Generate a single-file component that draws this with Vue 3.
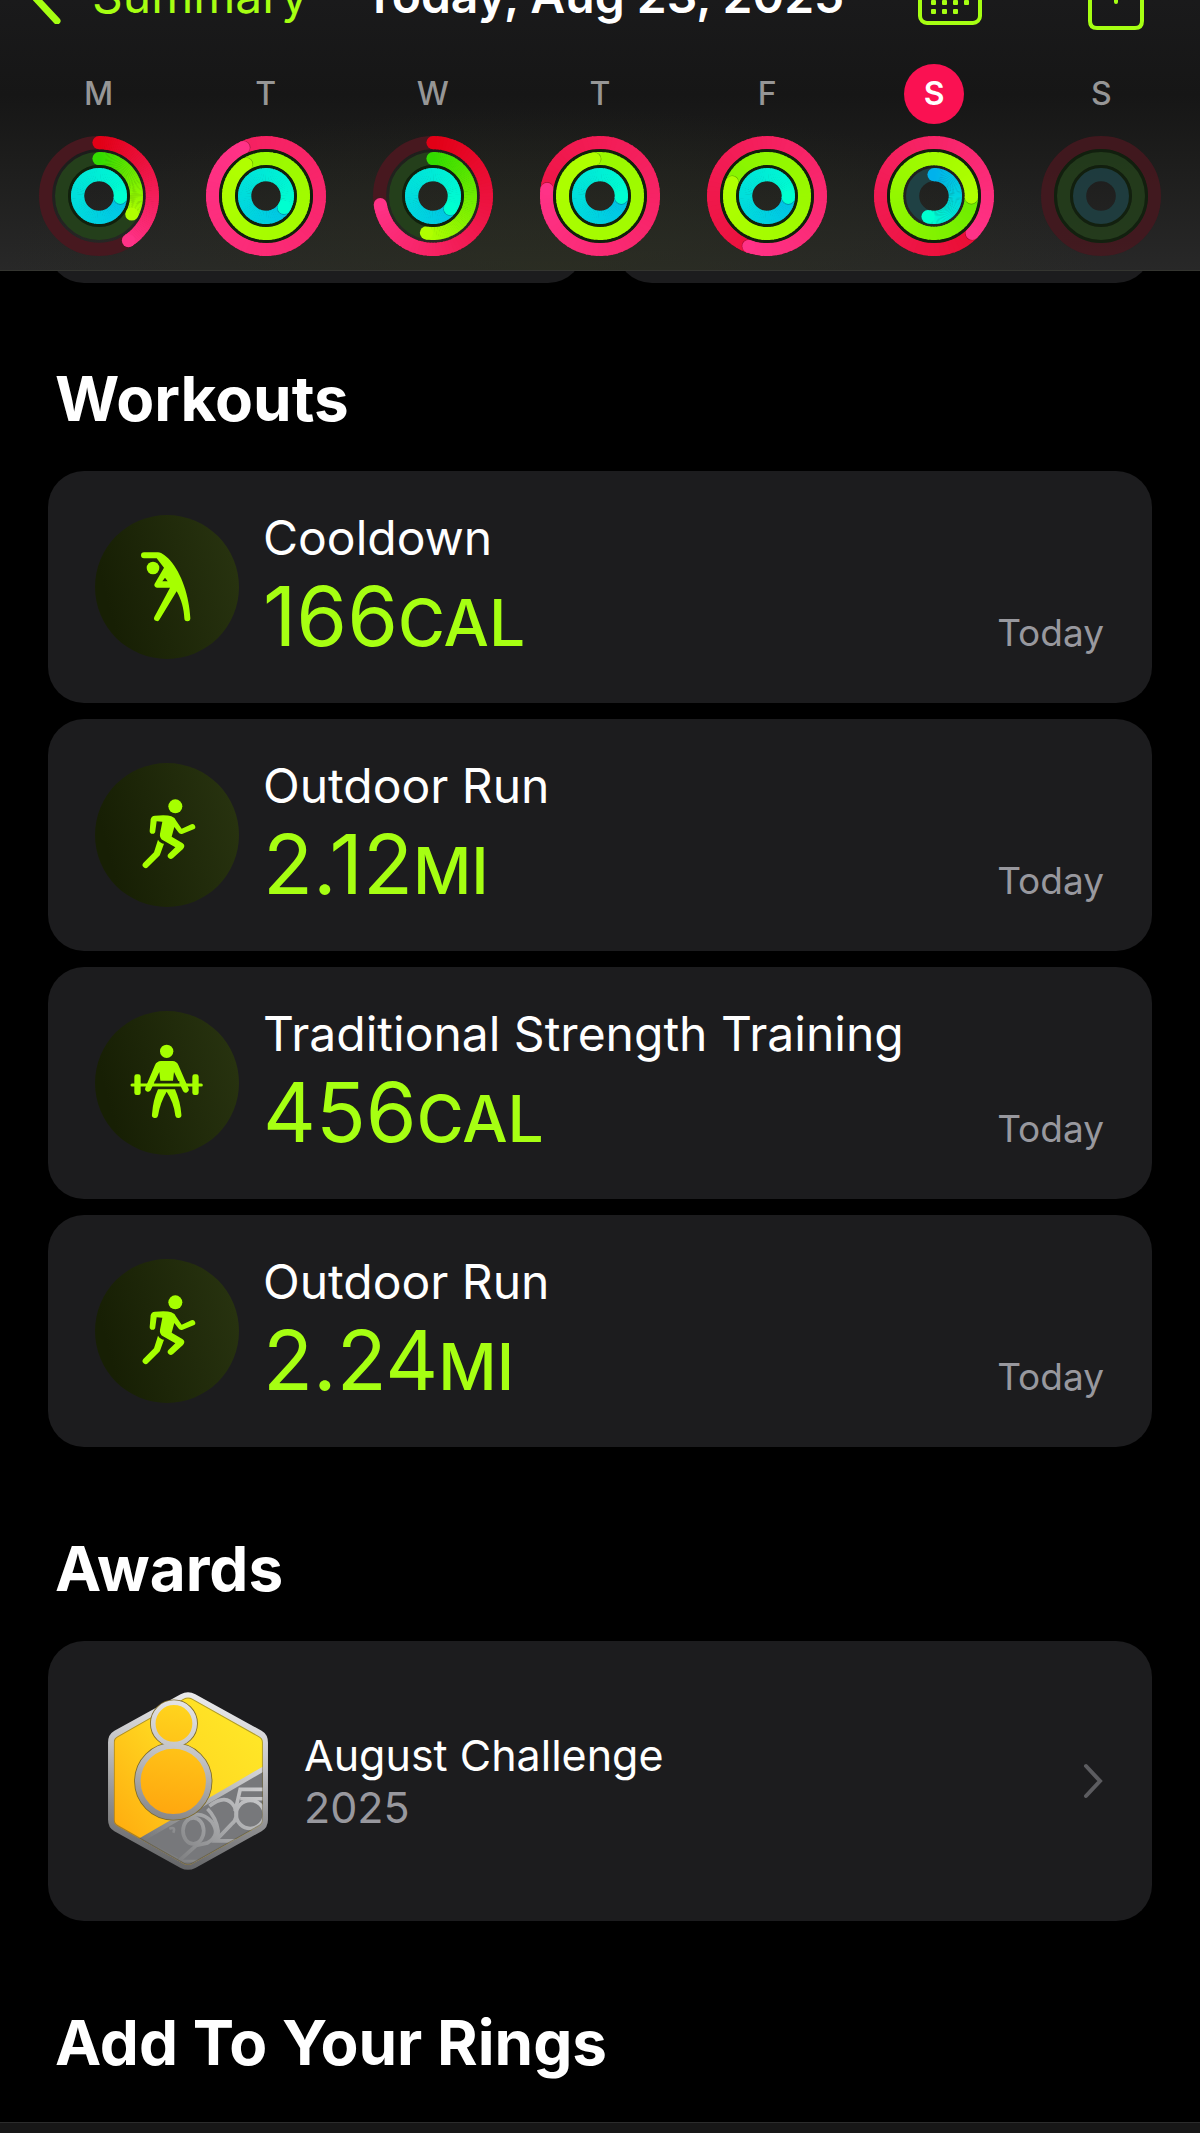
<template>
<div class="screen">
    <header class="header">
        <nav class="nav">
            <button class="back" type="button">
                <svg width="40" height="64" viewBox="0 0 40 64" aria-hidden="true">
                    <path d="M31 5 L5 33 L31 61" />
                </svg>
                <span>Summary</span>
            </button>
            <div class="nav-title">Today, Aug 23, 2025</div>
            <div class="nav-actions">
                <button class="action" type="button" aria-label="Calendar">
                    <svg width="64" height="60" viewBox="0 0 64 60" aria-hidden="true">
                        <rect class="line" x="2" y="2" width="60" height="56" rx="7" />
                        <rect class="dot" v-for="dot in calendarDots" :x="dot.x" :y="dot.y" width="5" height="5" rx="1" />
                    </svg>
                </button>
                <button class="action share" type="button" aria-label="Share">
                    <svg width="56" height="76" viewBox="0 0 56 76" aria-hidden="true">
                        <path class="line" d="M18 24 H9 Q2 24 2 31 V67 Q2 74 9 74 H47 Q54 74 54 67 V31 Q54 24 47 24 H38" />
                        <path class="line" d="M28 48 V3 M16 14 L28 3 L40 14" />
                    </svg>
                </button>
            </div>
        </nav>

        <div class="week">
            <div class="day" v-for="day in days">
                <div class="day-name" :class="{ selected: day.selected }">{{day.name}}</div>
                <svg class="rings" :class="{ future: day.future }" width="120" height="120" viewBox="0 0 120 120" aria-hidden="true">
                    <g v-for="ring in day.rings">
                        <circle class="ring-gap" v-if="ring.gap" cx="60" cy="60" :r="ring.r + 7.6" />
                        <circle class="ring-line" cx="60" cy="60" :r="ring.r" :stroke="ring.track" />
                        <circle v-if="ring.segments.length" :cx="ring.start.x" :cy="ring.start.y" r="6.6" :fill="ring.segments[0].color" />
                        <path class="ring-line" v-for="segment in ring.segments" :d="segment.d" :stroke="segment.color" />
                        <circle class="ring-shadow" v-if="ring.shadow" :cx="ring.shadow.x" :cy="ring.shadow.y" r="6.5" />
                        <circle v-if="ring.end" :cx="ring.end.x" :cy="ring.end.y" r="6.6" :fill="ring.endColor" />
                    </g>
                </svg>
            </div>
        </div>
    </header>

    <main class="content">
        <div class="tiles">
            <div class="tile"></div>
            <div class="tile"></div>
        </div>

        <h2 class="section-title">Workouts</h2>
        <div class="workouts">
            <div class="card workout" v-for="workout in workouts">
                <div class="workout-icon">
                    <svg v-if="workout.icon == 'stretch'" width="144" height="144" viewBox="47 48 432 432" aria-hidden="true">
                        <circle cx="221" cy="207" r="19" />
                        <path d="M194 160 H236 C248 161 262 173 272 184 C306 222 330 292 333 358 A8 8 0 0 1 315 358 C314 330 306 300 292 277 L241 361 A8 8 0 0 1 225 354 L272 266 H233 A8 8 0 0 1 226 254 L254 206 L232 178 H194 A8 8 0 0 1 194 160 Z M257 236 L249 247 H265 Z" fill-rule="evenodd" />
                    </svg>
                    <svg v-else-if="workout.icon == 'run'" width="144" height="144" viewBox="47 42 432 432" aria-hidden="true">
                        <circle cx="288" cy="172" r="21" />
                        <path d="M227 200 Q262 196 276 202 Q287 206 291 216 L307 239 L336 226 A8 8 0 0 1 343 241 L310 254 Q302 257 297 250 L285 234 L277 263 L309 282 Q320 290 311 300 L281 327 A9 9 0 0 1 268 314 L288 295 L251 274 Q240 267 242 254 L249 218 L232 217 L228 246 A8 8 0 0 1 211 246 L214 211 Q216 201 227 200 Z" />
                        <path d="M236 272 Q243 283 254 284 L242 317 Q241 320 237 323 L206 354 A9 9 0 0 1 192 342 L224 310 Z" />
                    </svg>
                    <svg v-else width="144" height="144" viewBox="47 51 432 432" aria-hidden="true">
                        <circle cx="262" cy="172" r="20" />
                        <path d="M245 201 H280 Q292 202 297 213 L327 282 A9 9 0 0 1 311 291 L284 234 L281 260 H243 L240 234 L214 289 A9 9 0 0 1 198 281 L227 213 Q232 202 245 201 Z" />
                        <path d="M236 286 H287 Q303 322 306 361 A9 9 0 0 1 288 365 Q284 326 262 293 Q242 326 236 365 A9 9 0 0 1 218 361 Q221 318 236 286 Z" />
                        <path class="bar-edge" d="M226 273 H300" />
                        <path class="bar" d="M158 273 H366" />
                        <rect x="165" y="241" width="19" height="62" rx="7" />
                        <rect x="339" y="241" width="19" height="62" rx="7" />
                    </svg>
                </div>
                <div class="workout-text">
                    <div class="workout-name">{{workout.name}}</div>
                    <div class="workout-row">
                        <div class="workout-value">{{workout.value}}<span class="unit">{{workout.unit}}</span></div>
                        <div class="workout-date">Today</div>
                    </div>
                </div>
            </div>
        </div>

        <h2 class="section-title">Awards</h2>
        <a class="card award" href="#">
            <svg class="medal" width="160" height="178" viewBox="55 71 478 532" aria-hidden="true">
                <defs>
                    <linearGradient id="silver" gradientUnits="userSpaceOnUse" x1="330" y1="70" x2="230" y2="600">
                        <stop offset="0" stop-color="#ececee" />
                        <stop offset="0.35" stop-color="#c4c4c6" />
                        <stop offset="0.7" stop-color="#8c8c8e" />
                        <stop offset="1" stop-color="#626365" />
                    </linearGradient>
                    <linearGradient id="gold" x1="1" y1="0" x2="0" y2="0.9">
                        <stop offset="0" stop-color="#ffec2a" />
                        <stop offset="0.45" stop-color="#ffdb22" />
                        <stop offset="1" stop-color="#ffa50c" />
                    </linearGradient>
                    <linearGradient id="disc" gradientUnits="userSpaceOnUse" x1="290" y1="100" x2="220" y2="440">
                        <stop offset="0" stop-color="#ffd61e" />
                        <stop offset="1" stop-color="#ffa60e" />
                    </linearGradient>
                    <linearGradient id="engraving" gradientUnits="userSpaceOnUse" x1="520" y1="300" x2="240" y2="590">
                        <stop offset="0" stop-color="#d6d6d8" />
                        <stop offset="0.5" stop-color="#a9aaac" />
                        <stop offset="1" stop-color="#77787a" />
                    </linearGradient>
                    <clipPath id="face">
                        <path d="M281 91 Q294 84 307 91 L506 203 Q518 209 518 222 V453 Q518 466 506 472 L307 584 Q294 591 281 584 L84 472 Q72 466 72 453 V222 Q72 209 84 203 Z" />
                    </clipPath>
                </defs>
                <path d="M272 78 Q294 66 316 78 L514 187 Q533 198 533 222 V453 Q533 477 514 487 L316 597 Q294 608 272 597 L74 487 Q55 477 55 453 V222 Q55 198 74 187 Z" fill="url(#silver)" />
                <g clip-path="url(#face)">
                    <path d="M60 70 H530 V600 H60 Z" fill="url(#gold)" />
                    <path d="M145 520 L530 295 V610 H145 Z" fill="#77787b" />
                    <g class="engraving">
                        <path d="M146 518 L530 295" stroke-width="14" />
                        <ellipse cx="310" cy="486" rx="31" ry="39" />
                        <path d="M290 452 Q328 420 364 458 Q394 498 352 522 L318 530 L262 580" />
                        <path d="M352 420 Q378 446 384 486 Q386 506 366 514" />
                        <path d="M358 412 Q408 372 433 414 Q448 446 424 466 L376 516 H452" />
                        <circle cx="480" cy="437" r="42" />
                        <path d="M435 428 L450 362 H524 M450 390 H524" />
                        <path d="M238 480 Q258 472 250 492 M276 576 H346 M170 520 L262 570" stroke-width="8" />
                    </g>
                    <path d="M281 91 Q294 84 307 91 L506 203 Q518 209 518 222 V453 Q518 466 506 472 L307 584 Q294 591 281 584 L84 472 Q72 466 72 453 V222 Q72 209 84 203 Z" fill="none" stroke="#5c522e" stroke-opacity="0.5" stroke-width="6" />
                </g>
                <g fill="url(#disc)">
                    <circle cx="252" cy="165" r="62" stroke="#7d6a2a" stroke-width="19" />
                    <circle cx="250" cy="338" r="106" stroke="#7d6a2a" stroke-width="22" />
                    <circle cx="252" cy="165" r="62" stroke="url(#silver)" stroke-width="14" />
                    <circle cx="250" cy="338" r="106" stroke="url(#silver)" stroke-width="17" />
                </g>
            </svg>
            <div class="award-text">
                <div>August Challenge</div>
                <div class="award-year">2025</div>
            </div>
            <svg class="chevron" width="20" height="36" viewBox="0 0 20 36" aria-hidden="true">
                <path d="M3 3 L17 18 L3 33" />
            </svg>
        </a>

        <h2 class="section-title last">Add To Your Rings</h2>
    </main>

    <footer class="tab-bar"></footer>
</div>
</template>

<script setup>

const calendarDots = [];
for (let row = 0; row < 3; row++) {
    for (let col = 0; col < 4; col++) {
        //last row is one day short
        if (row == 2 && col == 3) continue;
        calendarDots.push({ x: 13 + col * 11, y: 26 + row * 9 });
    }
}

const ringTypes = [
    { r: 53.4, from: [226, 0, 22], to: [255, 50, 135], track: '#47181f', ease: 1 },
    { r: 37.4, from: [52, 220, 0], to: [176, 255, 0], track: '#243f1b', ease: 0.5 },
    { r: 21.4, from: [0, 178, 236], to: [0, 255, 208], track: '#1f4144', ease: 1 },
];

const point = (r, turns) => {
    const angle = turns * Math.PI * 2;
    return { x: 60 + r * Math.sin(angle), y: 60 - r * Math.cos(angle) };
};

const mix = (from, to, amount) => {
    const parts = from.map((value, i) => Math.round(value + (to[i] - value) * amount));
    return `rgb(${parts.join(',')})`;
};

//only the last lap is visible, the colour runs over the whole distance
const buildRing = (type, progress) => {
    const first = Math.max(0, progress - 1);
    const count = progress ? 72 : 0;
    const step = (progress - first) / 72;
    const ease = progress > 1 ? type.ease : 1;
    const segments = [];
    for (let i = 0; i < count; i++) {
        const begin = first + i * step;
        const a = point(type.r, begin);
        const b = point(type.r, Math.min(progress, begin + step * 1.3));
        segments.push({
            d: `M${a.x} ${a.y} A${type.r} ${type.r} 0 0 1 ${b.x} ${b.y}`,
            color: mix(type.from, type.to, Math.pow(begin / progress, ease)),
        });
    }
    return {
        r: type.r,
        track: type.track,
        gap: type.r < 50 && (progress >= 1 || progress == 0),
        segments,
        start: point(type.r, first),
        end: progress ? point(type.r, progress) : null,
        endColor: mix(type.from, type.to, 1),
        shadow: progress > 1 ? point(type.r, progress + 0.8 / (type.r * 6.28)) : null,
    };
};

const week = [
    { name: 'M', progress: [0.407, 0.33, 1.26] },
    { name: 'T', progress: [2.93, 2.91, 1.34] },
    { name: 'W', progress: [0.724, 0.528, 1.35] },
    { name: 'T', progress: [1.77, 2.975, 1.26] },
    { name: 'F', progress: [1.555, 1.808, 1.26] },
    { name: 'S', progress: [1.373, 1.255, 0.545], selected: true },
    { name: 'S', progress: [0, 0, 0], future: true },
];

const days = week.map(day => ({
    ...day,
    rings: ringTypes.map((type, i) => buildRing(type, day.progress[i])),
}));

const workouts = [
    { icon: 'stretch', name: 'Cooldown', value: '166', unit: 'CAL' },
    { icon: 'run', name: 'Outdoor Run', value: '2.12', unit: 'MI' },
    { icon: 'strength', name: 'Traditional Strength Training', value: '456', unit: 'CAL' },
    { icon: 'run', name: 'Outdoor Run', value: '2.24', unit: 'MI' },
];

</script>

<style>
body {
    margin: 0;
    background-color: #000;
}
</style>

<style scoped>
.screen {
    display: flex;
    flex-direction: column;
    min-height: 100vh;
    overflow: hidden;
    background-color: #000;
    color: #fff;
    font-family: Inter, "Liberation Sans", sans-serif;
}
button {
    padding: 0;
    border: 0;
    background: none;
    color: inherit;
    font: inherit;
}
.header {
    position: relative;
    z-index: 1;
    border-bottom: 1px solid #343530;
    background:
        radial-gradient(ellipse 46% 60% at 46% 100%, #2c301f99, transparent),
        linear-gradient(#1a1a1b, #161616 35%, #1d1d1c 60%, #282828);
}

/* scrolled half way out of the window */
.nav {
    display: grid;
    grid-template-columns: auto 1fr auto;
    grid-template-rows: 32px;
    align-items: end;
    padding: 0 56px 0 26px;
    font-size: 48px;
    line-height: 72px;
}
.back {
    display: flex;
    align-items: center;
    gap: 26px;
    color: #a6ff12;
}
.back svg {
    margin-bottom: 8px;
}
.back path {
    fill: none;
    stroke: #a6ff12;
    stroke-width: 7;
    stroke-linecap: round;
    stroke-linejoin: round;
}
.nav-title {
    padding-right: 18px;
    text-align: center;
    font-weight: 600;
    white-space: nowrap;
}
.nav-actions {
    display: flex;
    align-items: flex-end;
    gap: 106px;
}
.action {
    display: flex;
    padding-bottom: 7px;
}
.share {
    padding-bottom: 2px;
}
.line {
    fill: none;
    stroke: #a6ff12;
    stroke-width: 4;
    stroke-linecap: round;
}
.dot {
    fill: #a6ff12;
}

.week {
    display: grid;
    grid-template-columns: repeat(7, 1fr);
    padding: 32px 15px 14px;
}
.day {
    display: flex;
    flex-direction: column;
    align-items: center;
    gap: 12px;
}
.day-name {
    width: 60px;
    height: 60px;
    border-radius: 50%;
    color: #969696;
    font-size: 32px;
    font-weight: 500;
    line-height: 60px;
    text-align: center;
}
.selected {
    background-color: #fa1152;
    color: #fff;
    font-weight: 600;
}
.rings {
    display: block;
}
.future {
    opacity: 0.85;
}
.ring-line {
    fill: none;
    stroke-width: 13.2;
}
.ring-gap {
    fill: none;
    stroke: #10200c;
    stroke-width: 4;
}
.ring-shadow {
    fill: #000;
    fill-opacity: 0.3;
}

.content {
    flex: 1;
    padding: 0 48px 38px;
}
.tiles {
    display: grid;
    grid-template-columns: 1fr 1fr;
    gap: 32px;
    height: 12px;
}
.tile {
    height: 96px;
    margin-top: -84px;
    border-radius: 36px;
    background-color: #1c1c1e;
}
.section-title {
    margin: 82px 0 32px;
    padding-left: 7px;
    font-size: 62px;
    font-weight: 700;
    line-height: 80px;
}
.tiles + .section-title {
    margin-top: 76px;
}
.section-title.last {
    margin-bottom: 0;
}
.card {
    box-sizing: border-box;
    border-radius: 36px;
    background-color: #1c1c1e;
}
.workouts {
    display: flex;
    flex-direction: column;
    gap: 16px;
}
.workout {
    display: flex;
    align-items: center;
    gap: 24px;
    padding: 40px 48px 40px 47px;
}
.workout-icon {
    flex: none;
    width: 144px;
    height: 144px;
    border-radius: 50%;
    background: linear-gradient(75deg, #171f04 15%, #27320f 90%);
}
.workout-icon svg {
    display: block;
    fill: #a6ff00;
}
.bar {
    stroke: #a6ff00;
    stroke-width: 9;
    stroke-linecap: round;
}
.bar-edge {
    stroke: #1e2809;
    stroke-width: 24;
}
.workout-text {
    flex: 1;
}
.workout-name {
    margin-bottom: 6px;
    font-size: 48px;
    line-height: 54px;
}
.workout-row {
    display: flex;
    align-items: baseline;
    justify-content: space-between;
}
.workout-value {
    color: #a6ff12;
    font-size: 82px;
    line-height: 92px;
}
.unit {
    font-size: 64px;
    font-weight: 500;
    line-height: 64px;
}
.workout-date {
    color: #98989e;
    font-size: 37px;
    line-height: 48px;
}
.award {
    display: flex;
    align-items: center;
    gap: 36px;
    padding: 51px 49px 51px 60px;
    color: #fff;
    text-decoration: none;
}
.engraving {
    fill: none;
    stroke: url(#engraving);
    stroke-width: 11;
}
.award-text {
    flex: 1;
    font-size: 43px;
    line-height: 52px;
}
.award-year {
    color: #98989e;
}
.chevron path {
    fill: none;
    stroke: #5c5c60;
    stroke-width: 4;
    stroke-linecap: round;
}
.tab-bar {
    box-sizing: border-box;
    height: 11px;
    border-top: 1px solid #2c2c2c;
    background-color: #171717;
}
</style>
